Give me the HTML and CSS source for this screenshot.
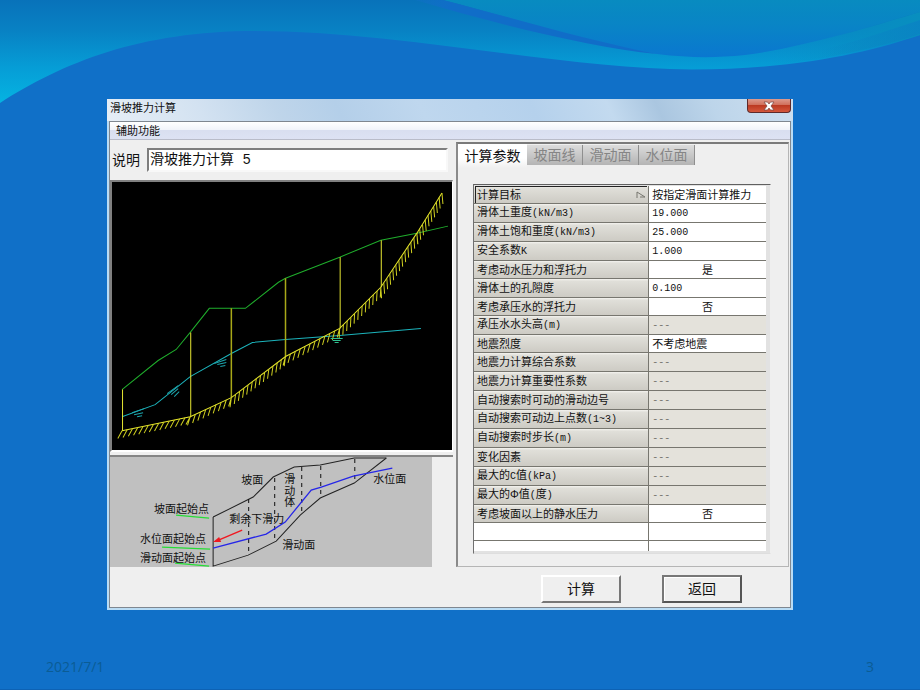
FILE: index.html
```html
<!DOCTYPE html>
<html lang="zh-CN">
<head>
<meta charset="utf-8">
<title>滑坡推力计算</title>
<link rel="stylesheet" href="styles.css">
</head>
<body>
<svg class="wave" viewBox="0 0 920 110" preserveAspectRatio="none" aria-hidden="true">
  <defs>
    <linearGradient id="band" gradientUnits="userSpaceOnUse" x1="0" y1="0" x2="0" y2="104">
      <stop offset="0" stop-color="#0872ba"/><stop offset=".3" stop-color="#0882c4"/><stop offset=".65" stop-color="#069dd6"/><stop offset="1" stop-color="#05b4e2"/>
    </linearGradient>
    <linearGradient id="lens" gradientUnits="userSpaceOnUse" x1="0" y1="0" x2="0" y2="58">
      <stop offset="0" stop-color="#088bc0"/><stop offset=".45" stop-color="#0984c6"/><stop offset="1" stop-color="#0a77d0"/>
    </linearGradient>
    <linearGradient id="wedge" gradientUnits="userSpaceOnUse" x1="415" y1="0" x2="450" y2="0">
      <stop offset="0" stop-color="#1170c8" stop-opacity=".3"/><stop offset="1" stop-color="#106dc8"/>
    </linearGradient>
    <linearGradient id="tail" gradientUnits="userSpaceOnUse" x1="770" y1="0" x2="920" y2="0">
      <stop offset="0" stop-color="#0896c8" stop-opacity="0"/><stop offset="1" stop-color="#088fbf"/>
    </linearGradient>
    <linearGradient id="fade" gradientUnits="userSpaceOnUse" x1="820" y1="0" x2="920" y2="0">
      <stop offset="0" stop-color="#0a82c4" stop-opacity="0"/><stop offset="1" stop-color="#0a82c4" stop-opacity=".8"/>
    </linearGradient>
  </defs>
  <path fill="url(#band)" d="M0 0H920V35C870 52 800 69 692 69.500C560 69 400 31 255 31C140 31 62 63 0 103Z"/>
  <path fill="url(#lens)" d="M443 0C510 17 585 42 657 54C690 58 715 58 745 55C800 48 865 28 920 12V0Z"/>
  <path fill="url(#wedge)" d="M415 0H443C510 17 585 40 657 54C590 47 500 25 415 0Z"/>
  <path fill="url(#tail)" d="M770 51C830 40 880 24 920 12V35C870 50 820 60 770 65Z"/>
  <path fill="url(#fade)" d="M820 50C855 42 890 30 920 20V34C890 44 855 52 820 58Z"/>
</svg>

<main class="stage">
  <section class="window">
    <header class="titlebar">
      <h1>滑坡推力计算</h1>
      <button class="close" type="button" aria-label="关闭">
        <svg viewBox="0 0 12 10" width="12" height="10"><path d="M1 1h3.500L6 3l1.500-2H11L8 5l3 4H7.500L6 7 4.500 9H1l3-4z" fill="#fff" stroke="#74433f" stroke-width=".7"/></svg>
      </button>
    </header>
    <div class="frame">
      <nav class="menubar"><button type="button">辅助功能</button></nav>
      <div class="content">
        <div class="left">
          <div class="caption">
            <label for="note">说明</label>
            <input id="note" type="text" value="滑坡推力计算 5">
          </div>
          <div class="plot">
            <svg viewBox="112 182 339 267">
              <g fill="none" stroke-width="1">
                <polyline stroke="#1fae2c" points="122,389 158,360 176,349 190,332 209,308 245,308 278,282 285,278 339,257 380,240 416,233 447,226"/>
                <polyline stroke="#1cb4bc" points="122,416 155,404 190,376 231,353 252,342 285,339 339,335 420,328"/>
                <path stroke="#e6e632" d="M122.500 389V430M190.500 332V416M339.500 257V328M380.500 240V287"/>
                <path stroke="#a8a818" stroke-width="1.500" d="M231 308V397M285 278V356"/>
                <polyline id="slip" stroke="#e8e82c" points="122,430 190,416 231,397 285,356 339,328 380,287 416,233 441,193"/>
                <path id="hatch" stroke="#d0d020"/>
                <path stroke="#1ca4ac" d="M132 412l12-4M134 414l9-2M137 416l5-1M167 393l11-8M171 394l7-6M174 396l5-5M214 363l12-4M217 364l9-2M220 366l5-1"/>
                <path stroke="#30c090" d="M330 338h12M332 340h8M334 342h4"/>
              </g>
            </svg>
          </div>
          <div class="legend">
            <svg viewBox="110 456 322 110">
              <g fill="none" stroke="#222" stroke-width="1">
                <polyline points="213,516 253,496 273,476 294,466 320,464 354,457 386,457"/>
                <polyline points="213,516 213,565 248,554 276,540 300,514 320,497 354,482 386,457"/>
                <path stroke="#111" stroke-dasharray="4 4" d="M248.500 498V554M274.500 477V540M301.500 466V511M320.500 465V497M354.500 458V482"/>
                <polyline stroke="#2626e8" stroke-width="1.300" points="213,547 266,533 285,521 311,489 321,486 353,475 392,467"/>
                <path stroke="#26dd36" stroke-width="1.300" d="M176 514L209 517M162 546L210 548M175 562L209 565"/>
                <path stroke="#f01820" stroke-width="1.500" d="M242 529L216 540"/>
              </g>
              <path fill="#f01820" d="M213 541l6-5 2 5z"/>
              <g class="tags">
                <text x="241" y="483">坡面</text>
                <text x="284" y="482">滑</text><text x="284" y="494">动</text><text x="284" y="505">体</text>
                <text x="373" y="482">水位面</text>
                <text x="154" y="512">坡面起始点</text>
                <text x="229" y="522">剩余下滑力</text>
                <text x="140" y="542">水位面起始点</text>
                <text x="282" y="548">滑动面</text>
                <text x="140" y="561">滑动面起始点</text>
              </g>
            </svg>
          </div>
        </div>

        <div class="right">
          <div class="tabs" role="tablist">
            <button type="button" role="tab" aria-selected="true">计算参数</button>
            <button type="button" role="tab" aria-selected="false">坡面线</button>
            <button type="button" role="tab" aria-selected="false">滑动面</button>
            <button type="button" role="tab" aria-selected="false">水位面</button>
          </div>
          <div class="sheet">
            <table class="params">
              <tbody>
                <tr class="current"><th scope="row"><div>计算目标<svg viewBox="0 0 10 8" width="10" height="8"><path d="M1 7V1l8 5H4" fill="none" stroke="#77766f"/></svg></div></th><td>按指定滑面计算推力</td></tr>
                <tr><th scope="row">滑体土重度<span>(kN/m3)</span></th><td><span>19.000</span></td></tr>
                <tr><th scope="row">滑体土饱和重度<span>(kN/m3)</span></th><td><span>25.000</span></td></tr>
                <tr><th scope="row">安全系数<span>K</span></th><td><span>1.000</span></td></tr>
                <tr><th scope="row">考虑动水压力和浮托力</th><td class="mid">是</td></tr>
                <tr><th scope="row">滑体土的孔隙度</th><td><span>0.100</span></td></tr>
                <tr><th scope="row">考虑承压水的浮托力</th><td class="mid">否</td></tr>
                <tr><th scope="row">承压水水头高<span>(m)</span></th><td class="off"><span>---</span></td></tr>
                <tr><th scope="row">地震烈度</th><td>不考虑地震</td></tr>
                <tr><th scope="row">地震力计算综合系数</th><td class="off"><span>---</span></td></tr>
                <tr><th scope="row">地震力计算重要性系数</th><td class="off"><span>---</span></td></tr>
                <tr><th scope="row">自动搜索时可动的滑动边号</th><td class="off"><span>---</span></td></tr>
                <tr><th scope="row">自动搜索可动边上点数<span>(1~3)</span></th><td class="off"><span>---</span></td></tr>
                <tr><th scope="row">自动搜索时步长<span>(m)</span></th><td class="off"><span>---</span></td></tr>
                <tr><th scope="row">变化因素</th><td class="off"><span>---</span></td></tr>
                <tr><th scope="row">最大的<span>C</span>值<span>(kPa)</span></th><td class="off"><span>---</span></td></tr>
                <tr><th scope="row">最大的Φ值<span>(</span>度<span>)</span></th><td class="off"><span>---</span></td></tr>
                <tr><th scope="row">考虑坡面以上的静水压力</th><td class="mid">否</td></tr>
                <tr><td></td><td></td></tr>
                <tr class="last"><td></td><td></td></tr>
              </tbody>
            </table>
          </div>
        </div>
      </div>
      <div class="actions">
        <button type="button">计算</button>
        <button type="button" class="default">返回</button>
      </div>
    </div>
  </section>
</main>

<footer class="slide-footer"><span>2021/7/1</span><span>3</span></footer>
<script src="script.js"></script>
</body>
</html>
```
FILE: styles.css
```css
* { box-sizing: border-box; }

body {
  margin: 0;
  min-height: 100vh;
  display: flex;
  flex-direction: column;
  background: #1070c8;
  color: #111;
  font: 11px/16px "Liberation Sans", "Noto Sans CJK SC", sans-serif;
}

button, input { font: inherit; color: inherit; margin: 0; }
button { border: 0; padding: 0; background: none; }

.wave {
  position: absolute;
  top: 0;
  left: 0;
  width: 100%;
  height: 110px;
}

.stage { position: relative; padding: 99px 127px 0 107px; }

.window {
  padding: 0 2px 2px;
  background: #b9dcf5;
}

.titlebar {
  display: flex;
  justify-content: space-between;
  align-items: flex-start;
  height: 22px;
  margin: 0 -2px;
  padding: 0 2px 0 3px;
  background: linear-gradient(65deg, #e6eef6 0, #d3e2f1 14%, #bfd5ea 25%, #b4cfe9 34%, #bfd7ee 46%, #b5d1ec 62%, #c3daef 73%, #aac6e0 80%, #bdd5ea 88%, #cddff0 100%);
}

.titlebar h1 { margin: 0; font-size: 11px; line-height: 18px; font-weight: 400; }

.close {
  display: flex;
  align-items: center;
  justify-content: center;
  width: 44px;
  height: 14px;
  border: 1px solid #5e2a2a;
  border-top: 0;
  border-radius: 0 0 4px 4px;
  background: linear-gradient(#dd9a8c 0, #d0705c 45%, #bc3a22 50%, #d4573c 100%);
}

.frame { border: 1px solid #7f8790; background: #efefef; }

.menubar {
  display: flex;
  height: 18px;
  padding: 0 6px;
  background: linear-gradient(#fff 0, #f1f4fa 45%, #d9dff0 50%, #dde2f3 100%);
  border-bottom: 1px solid #b9bcc9;
}

.content { display: flex; gap: 3px; padding: 1px 1px 0 0; }

.left { flex: 344 1 0; min-width: 0; }

.caption {
  display: flex;
  align-items: center;
  gap: 7px;
  padding: 7px 5px 8px 2px;
  font-size: 14px;
  line-height: 20px;
}

.caption input {
  flex: 1;
  min-width: 0;
  height: 24px;
  padding: 0 2px 4px 1px;
  border: 2px solid;
  border-color: #7d7d7d #f8f8f8 #f8f8f8 #7d7d7d;
  background: #fff;
  font-family: "Liberation Mono", "Noto Sans CJK SC", monospace;
  line-height: 18px;
}

.plot {
  border: 2px solid;
  border-color: #808080 #fff #fff #808080;
  border-right-width: 1px;
  background: #000;
}

.plot svg, .legend svg { display: block; width: 100%; }

.legend { margin-top: 3px; border-top: 2px solid #858585; }
.legend svg { width: 94%; background: #c0c0c0; }
.tags { font-size: 11px; fill: #111; }

.right {
  flex: 331 1 0;
  min-width: 0;
  display: flex;
  flex-direction: column;
  margin-top: 1px;
  border: 2px solid;
  border-color: #7a7a7a #b5b5b5 #b5b5b5 #8a8a8a;
  border-right-width: 1px;
  border-bottom-width: 1px;
}

.tabs {
  display: flex;
  align-items: flex-start;
  height: 24px;
  font-size: 14px;
  line-height: 20px;
}

.tabs button {
  flex: 56 1 0;
  max-width: 56px;
  height: 20px;
  margin-top: 1px;
  border-right: 1px solid #8f8f8f;
  background: linear-gradient(#dcdcdc, #b4b4b4);
  color: #858585;
}

.tabs button[aria-selected="true"] {
  flex: 69 1 0;
  max-width: 69px;
  height: 24px;
  margin-top: 0;
  border-right: 0;
  background: linear-gradient(#fff 60%, #efefef);
  color: #111;
}

.sheet {
  margin: 16px 17px 12px 15px;
  padding: 1px 4px 2px 0;
  border: 1px solid;
  border-color: #606060 #efefef #dedede #707070;
  background: #e2e2e2;
}

.params {
  width: 100%;
  height: 365px;
  border-collapse: separate;
  border-spacing: 0;
  table-layout: fixed;
  line-height: 16px;
}

.params th, .params td {
  height: 18px;
  padding: 0 3px;
  border-bottom: 1px solid #77766f;
  text-align: left;
  font-weight: 400;
  white-space: nowrap;
  background: #fff;
}

.params th {
  width: 60%;
  background: linear-gradient(#f4f3ef 0, #e0dfd9 12%, #cdcbc4 100%);
}

.params th, .params td:first-child { border-right: 1px solid #77766f; }
.params td.mid { text-align: center; }
.params td.off { background: #e4e2db; color: #77766f; }
.params .last td { height: 10px; border-bottom: 0; }
.params span { font-family: "Liberation Mono", monospace; font-size: 10px; }

.params .current th { padding: 0 1px; }
.params .current div {
  display: flex;
  justify-content: space-between;
  align-items: center;
  padding: 0 1px;
  border-top: 1px solid #222;
  border-left: 1px solid #222;
}

.actions {
  display: flex;
  justify-content: flex-end;
  gap: 41px;
  padding: 8px 48px 4px;
  font-size: 14px;
}

.actions button {
  width: 80px;
  height: 28px;
  border: 2px solid;
  border-color: #fff #777 #777 #fff;
  background: #efefef;
}

.actions .default { border-color: #777 #555 #555 #777; box-shadow: inset 1px 1px #fff; }

.slide-footer {
  display: flex;
  justify-content: space-between;
  margin-top: auto;
  padding: 0 46px 12px;
  border-bottom: 1px solid #0d62b4;
  color: #0b5c94;
  font: 14px/20px "Open Sans", "Noto Sans", sans-serif;
}
```
FILE: script.js
```js
// Ground hatching: short strokes at an even pitch below the slip line.
const slip = document.getElementById('slip').points;
let d = '';
for (let i = 0; i + 1 < slip.numberOfItems; i++) {
  const a = slip.getItem(i), b = slip.getItem(i + 1);
  const dx = b.x - a.x, dy = b.y - a.y;
  const len = Math.hypot(dx, dy);
  const slope = Math.atan2(-dy, dx);
  const n = Math.round(len / 5.4);
  const lean = 5.5 - slope * 6.4;
  for (let k = 0; k <= n; k++) {
    const x = a.x + dx * k / n, y = a.y + dy * k / n;
    d += `M${x.toFixed(1)} ${y.toFixed(1)}l${(-lean).toFixed(1)} ${(7 + slope * 4).toFixed(1)}`;
  }
}
document.getElementById('hatch').setAttribute('d', d);
```
